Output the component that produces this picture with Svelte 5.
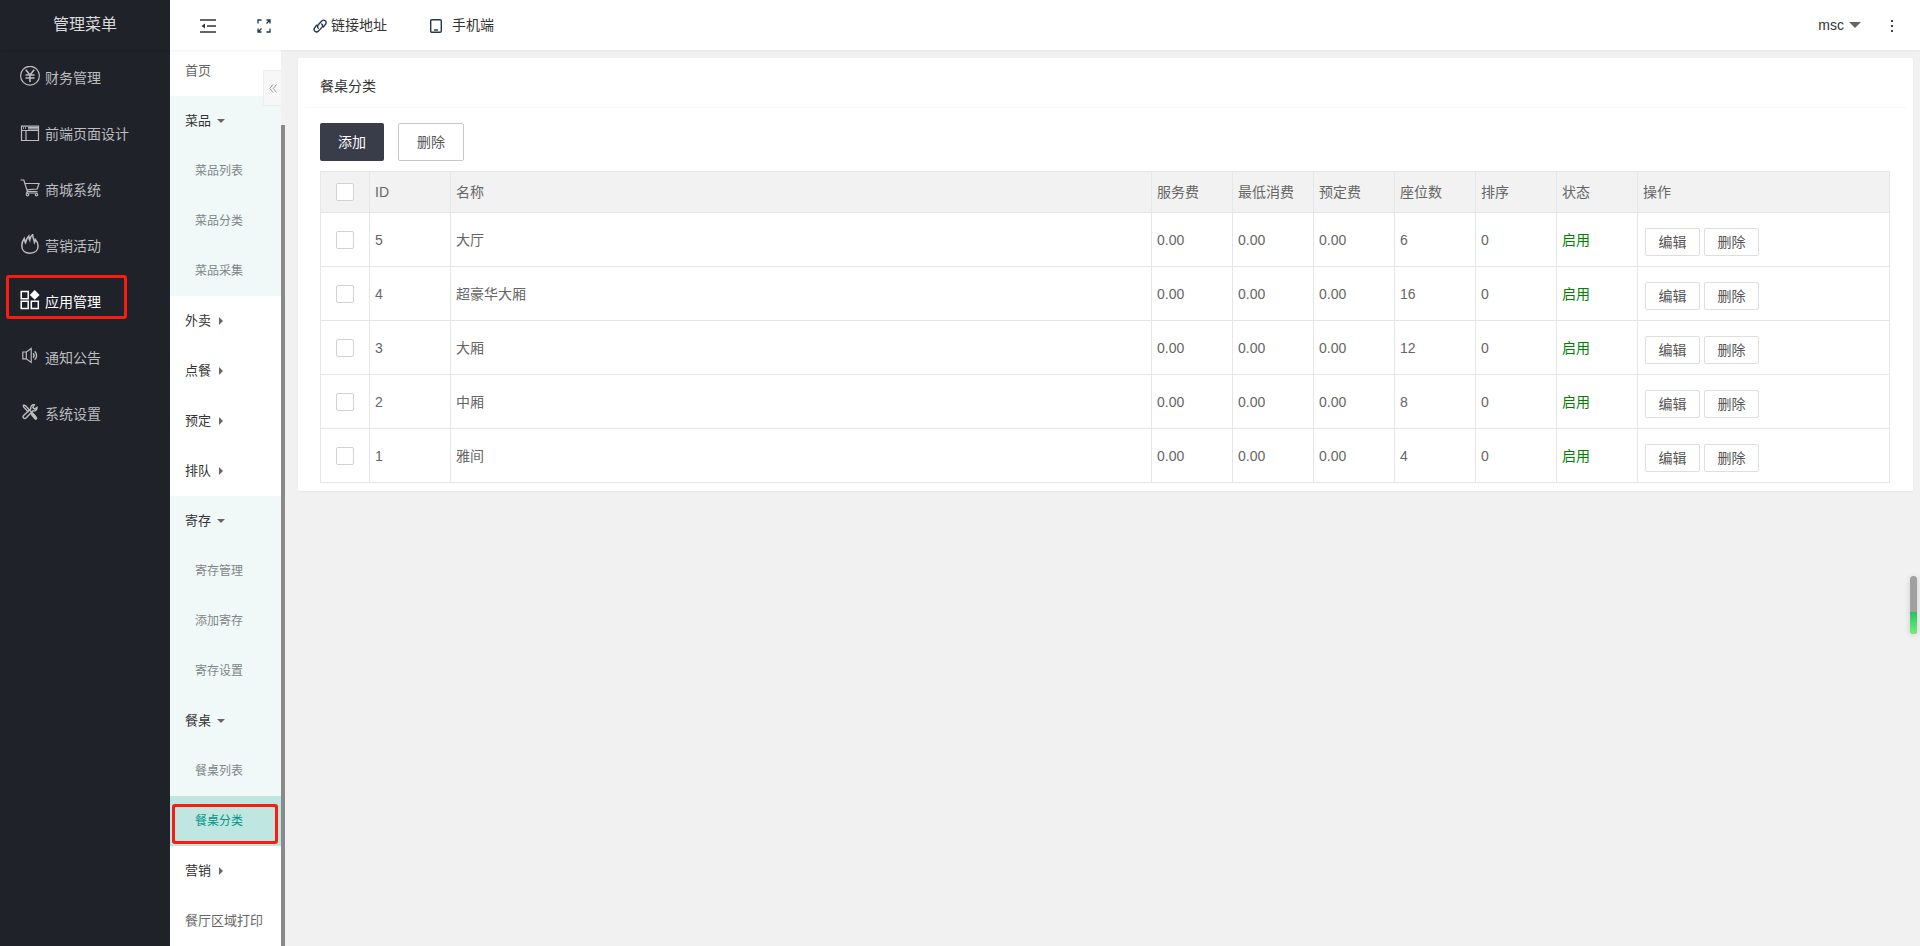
<script lang="ts">
  interface SubGroup {
    name: string
    plain?: boolean
    children?: string[]
  }

  const mainMenu = [
    { name: '财务管理', icon: 'yen' },
    { name: '前端页面设计', icon: 'layout' },
    { name: '商城系统', icon: 'cart' },
    { name: '营销活动', icon: 'fire' },
    { name: '应用管理', icon: 'app' },
    { name: '通知公告', icon: 'speaker' },
    { name: '系统设置', icon: 'tools' },
  ]

  const subMenu: SubGroup[] = [
    { name: '首页', plain: true },
    { name: '菜品', children: ['菜品列表', '菜品分类', '菜品采集'] },
    { name: '外卖' },
    { name: '点餐' },
    { name: '预定' },
    { name: '排队' },
    { name: '寄存', children: ['寄存管理', '添加寄存', '寄存设置'] },
    { name: '餐桌', children: ['餐桌列表', '餐桌分类'] },
    { name: '营销' },
    { name: '餐厅区域打印', plain: true },
  ]

  const columns = ['ID', '名称', '服务费', '最低消费', '预定费', '座位数', '排序', '状态', '操作']

  const rows = [
    { id: 5, name: '大厅', seats: 6 },
    { id: 4, name: '超豪华大厢', seats: 16 },
    { id: 3, name: '大厢', seats: 12 },
    { id: 2, name: '中厢', seats: 8 },
    { id: 1, name: '雅间', seats: 4 },
  ]

  let activeMain = $state('应用管理')
  let activeSub = $state('餐桌分类')
  let selected: number[] = $state([])

  function toggleAll(e: Event) {
    const checked = (e.currentTarget as HTMLInputElement).checked
    selected = checked ? rows.map((r) => r.id) : []
  }
</script>

<div class="layout">
  <aside class="side">
    <div class="logo">管理菜单</div>
    <nav>
      {#each mainMenu as item}
        <button class="side-item" class:active={item.name === activeMain} onclick={() => (activeMain = item.name)}>
          <svg class="side-icon" viewBox="0 0 20 20" aria-hidden="true">
            {#if item.icon === 'yen'}
              <circle cx="10" cy="9.700" r="9.400" />
              <path d="M5.800 3.800 10 9l4.200-5.200M10 9v7M5.500 9h9M5.500 12h9" stroke-width="1.600" />
            {:else if item.icon === 'layout'}
              <path d="M1.500 4.200h17v14.300h-17zM1.500 8.500h17M6 8.500v10" />
              <path d="M8 5.600h10M8 7h10" />
              <path d="M3 6h1M5 6h1" stroke-width="1.500" />
            {:else if item.icon === 'cart'}
              <path d="M.5 2h3.300l3.600 11.500h10M5 5.500h14l-1.800 5.500-10.500.8" />
              <path d="M7.400 13.500 6.500 15h11" />
              <circle cx="7.500" cy="16.700" r="1.200" />
              <circle cx="16.500" cy="16.700" r="1.200" />
            {:else if item.icon === 'fire'}
              <path d="M10 19.200c-5 0-8.200-3-8.200-7.500 0-3 1-5.200 2.400-7.200.2 1.800.5 3 1.300 4.300C6 6.300 6.800 4 8.800 2c.1 1.800.3 3 .9 4.200C10 4 10.900 2 12.700.5c-.2 3 1.300 5 1.800 8 .6-1 .8-1.800.9-3 1.800 2 2.700 4 2.700 6.500 0 4.500-3.200 7.200-8.100 7.200z" stroke-width="1.500" />
            {:else if item.icon === 'app'}
              <path d="M1.200 1.500h7v7.200h-7zM1.200 11.200h7v7.200h-7zM11.300 11.200h7v7.200h-7z" stroke-width="1.500" />
              <path class="solid" d="m14.700 0 4.900 4.900-4.900 4.900-4.900-4.900z" />
            {:else if item.icon === 'speaker'}
              <path d="M2.800 6h3.500l4.900-3.600v14l-4.900-3.600H2.800zM6.300 6v6.800" />
              <path d="M13.200 7.200c1 1.300 1 3.200 0 4.500M14.700 5.200c2.500 2.500 2.500 6 0 8.500" stroke-width="1.400" />
            {:else}
              <path d="m3.200 3 2.200.6L16 15" stroke-width="1.500" />
              <path d="m3.200 3 .6 2.200L8.500 10" stroke-width="1.500" />
              <path d="m12.300 12.300 3.400 4" stroke-width="3.200" stroke-linecap="round" />
              <path d="M17 5.200 14.500 7l-1.700-1.500 1.500-2.700c-2.500-.2-4.200 1.700-3.500 4L3.600 13.500c-1.700 1.800.7 4 2.500 2.400l6.800-7.200c2.400.7 4.600-1 4.100-3.500z" stroke-width="1.400" />
            {/if}
          </svg>
          <span>{item.name}</span>
        </button>
      {/each}
    </nav>
    <div class="mark mark-main"></div>
  </aside>

  <div class="page">
    <header class="topbar">
      <button class="tool tool-fold" aria-label="收起菜单">
        <svg width="16" height="16" viewBox="0 0 16 16" aria-hidden="true">
          <path d="M0 2h16M7 8h9M0 14h16" stroke="#333" stroke-width="1.500" />
          <path d="M5 5.500v5L1.500 8z" fill="#333" />
        </svg>
      </button>
      <button class="tool tool-full" aria-label="全屏">
        <svg width="14" height="14" viewBox="0 0 14 14" fill="none" stroke="#24384c" stroke-width="1.300" aria-hidden="true">
          <path d="M1 4.500V1h3.500M9.500 1H13v3.500M1 9.500V13h3.500M13 9.500V13H9.500M9.500 4.500 13 1M4.500 9.500 1 13" />
        </svg>
      </button>
      <a class="tool tool-link" href="#link">
        <svg width="14" height="14" viewBox="0 0 14 14" fill="none" stroke="#24384c" stroke-width="1.400" stroke-linecap="round" aria-hidden="true">
          <path d="M5.200 9.200C4.300 8 4.300 6.800 5.300 5.700l3.400-3.600c2.500-2.400 5.600.4 3.900 3.100L10.300 8" />
          <path d="M8.700 4.900c1.100 1 1.200 2.300.2 3.500l-3.400 3.700C3 14.300-.1 11.400 1.600 8.800l2-2.500" />
        </svg>
        <span>链接地址</span>
      </a>
      <a class="tool tool-phone" href="#mobile">
        <svg width="12" height="14" viewBox="0 0 12 14" fill="none" stroke="#24384c" stroke-width="1.400" aria-hidden="true">
          <rect x=".7" y=".7" width="10.600" height="12.600" rx="1.200" />
          <path d="M4 11h4" />
        </svg>
        <span>手机端</span>
      </a>
      <div class="spacer"></div>
      <button class="user">msc <i class="user-caret"></i></button>
      <button class="more" aria-label="更多"><i></i><i></i><i></i></button>
    </header>

    <div class="content">
      <div class="sub">
        <nav class="sub-list">
          {#each subMenu as group}
            <div class="sub-group" class:open={group.children}>
              <a class="sub-title" class:plain={group.plain} href="#{group.name}">
                {group.name}
                {#if !group.plain}<i class="caret"></i>{/if}
              </a>
              {#each group.children ?? [] as child}
                <a class="sub-item" class:active={child === activeSub} href="#{child}" onclick={() => (activeSub = child)}>{child}</a>
              {/each}
            </div>
          {/each}
        </nav>
        <div class="track"><div class="thumb"></div></div>
        <button class="collapse" aria-label="收起">
          <svg width="8" height="9" viewBox="0 0 8 9" fill="none" stroke="#999" aria-hidden="true">
            <path d="M4 .5.800 4.500 4 8.500M7.500.5l-3.200 4 3.200 4" />
          </svg>
        </button>
        <div class="mark mark-sub"></div>
      </div>

      <main class="main">
        <section class="card">
          <h1>餐桌分类</h1>
          <div class="card-body">
            <div class="actions">
              <button class="btn btn-add">添加</button>
              <button class="btn btn-plain">删除</button>
            </div>
            <table>
              <colgroup>
                <col class="col-check" />
                <col class="col-sm" />
                <col />
                <col class="col-sm" span="6" />
                <col class="col-ops" />
              </colgroup>
              <thead>
                <tr>
                  <th class="check">
                    <input type="checkbox" aria-label="全选" checked={selected.length === rows.length} onchange={toggleAll} />
                  </th>
                  {#each columns as col}
                    <th>{col}</th>
                  {/each}
                </tr>
              </thead>
              <tbody>
                {#each rows as row}
                  <tr>
                    <td class="check">
                      <input type="checkbox" aria-label={row.name} value={row.id} bind:group={selected} />
                    </td>
                    <td>{row.id}</td>
                    <td>{row.name}</td>
                    <td>0.00</td>
                    <td>0.00</td>
                    <td>0.00</td>
                    <td>{row.seats}</td>
                    <td>0</td>
                    <td class="enabled">启用</td>
                    <td>
                      <div class="ops">
                        <button class="btn-sm">编辑</button>
                        <button class="btn-sm">删除</button>
                      </div>
                    </td>
                  </tr>
                {/each}
              </tbody>
            </table>
          </div>
        </section>
      </main>
    </div>
  </div>

  <div class="gauge"><div class="gauge-fill"></div></div>
</div>

<style>
  :global(body) {
    background: #f1f1f1;
  }
  .layout {
    display: flex;
    position: relative;
    height: 100vh;
    overflow: hidden;
    font: 14px/24px "Liberation Sans", "Noto Sans CJK SC", sans-serif;
    color: #666;
  }
  .layout :global(*) {
    box-sizing: border-box;
  }
  button {
    margin: 0;
    padding: 0;
    border: 0;
    background: none;
    font: inherit;
    color: inherit;
    cursor: pointer;
  }
  a {
    color: inherit;
    text-decoration: none;
  }

  /* left menu */
  .side {
    position: relative;
    flex: none;
    width: 170px;
    background: #20222a;
  }
  .logo {
    height: 50px;
    line-height: 50px;
    font-size: 16px;
    text-align: center;
    color: #d9dadb;
    box-shadow: 0 1px 2px rgba(0, 0, 0, .15);
  }
  .side-item {
    display: flex;
    align-items: center;
    gap: 5px;
    width: 100%;
    height: 56px;
    padding-left: 20px;
    color: #bcbdbf;
  }
  .side-item.active {
    color: #fff;
  }
  .side-icon {
    width: 20px;
    height: 20px;
    margin-bottom: 4px;
    fill: none;
    stroke: currentColor;
    stroke-width: 1.2;
  }
  .side-icon .solid {
    fill: currentColor;
    stroke: none;
  }
  .mark {
    position: absolute;
    border: 3px solid #fb1b10;
    border-radius: 3px;
    pointer-events: none;
  }
  .mark-main {
    left: 6px;
    top: 275px;
    width: 121px;
    height: 44px;
  }
  .mark-sub {
    left: 2px;
    top: 754px;
    width: 106px;
    height: 40px;
  }

  .page {
    flex: 1;
    min-width: 0;
    display: flex;
    flex-direction: column;
  }

  /* top bar */
  .topbar {
    position: relative;
    z-index: 1;
    flex: none;
    display: flex;
    align-items: center;
    height: 50px;
    padding: 0 27px 0 30px;
    background: #fff;
    color: #333;
    box-shadow: 0 1px 2px rgba(0, 0, 0, .05);
  }
  .tool {
    display: flex;
    align-items: center;
    height: 50px;
  }
  .tool svg {
    margin-top: 2px;
  }
  .tool-full {
    margin-left: 41px;
  }
  .tool-link {
    margin-left: 42px;
    gap: 4px;
  }
  .tool-phone {
    margin-left: 43px;
    gap: 10px;
  }
  .spacer {
    flex: 1;
  }
  .user {
    display: flex;
    align-items: center;
    gap: 5px;
  }
  .user-caret {
    border: 6px solid transparent;
    border-top-color: #666;
    border-bottom: 0;
  }
  .more {
    display: grid;
    gap: 3px;
    margin-top: 2px;
    margin-left: 30px;
  }
  .more i {
    width: 2px;
    height: 2px;
    background: #444;
  }

  .content {
    flex: 1;
    min-height: 0;
    display: flex;
  }

  /* second menu */
  .sub {
    position: relative;
    flex: none;
    display: flex;
    width: 115px;
    background: #fff;
  }
  .sub-list {
    flex: 1;
    margin-top: -4px;
    overflow: hidden;
  }
  .sub-group.open {
    background: #f0f9f8;
  }
  .sub-title,
  .sub-item {
    display: block;
    height: 50px;
    line-height: 50px;
    white-space: nowrap;
  }
  .sub-title {
    padding-left: 15px;
    font-size: 13px;
    color: #333;
  }
  .sub-title.plain {
    color: #666;
  }
  .sub-item {
    padding-left: 25px;
    font-size: 12px;
    color: #808588;
  }
  .sub-item.active {
    background: #c0e6e1;
    color: #009688;
  }
  .caret {
    display: inline-block;
    margin-left: 4px;
    border: 4px solid transparent;
    border-left-color: #666;
    border-right: 0;
  }
  .open .caret {
    margin-left: 2px;
    border: 4px solid transparent;
    border-top-color: #666;
    border-bottom: 0;
    vertical-align: 2px;
  }
  .track {
    width: 4px;
    padding-top: 75px;
    background: #f1f1f1;
  }
  .thumb {
    height: 100%;
    background: #8a8a8a;
  }
  .collapse {
    position: absolute;
    top: 20px;
    right: 4px;
    display: flex;
    align-items: center;
    justify-content: center;
    width: 18px;
    height: 36px;
    border: 1px solid #eee;
    border-right: 0;
    background: #f7f7f7;
  }

  /* content card */
  .main {
    flex: 1;
    min-width: 0;
    padding: 8px 7px 8px 13px;
  }
  .card {
    padding: 0 7px 8px;
    border-radius: 2px;
    background: #fff;
    box-shadow: 0 1px 2px rgba(0, 0, 0, .05);
  }
  h1 {
    height: 50px;
    margin: 0;
    padding-left: 15px;
    border-bottom: 1px solid #f6f6f6;
    font-size: 14px;
    font-weight: 400;
    line-height: 56px;
    color: #333;
  }
  .card-body {
    padding: 15px 16px 0 15px;
  }
  .actions {
    display: flex;
    gap: 14px;
    margin-bottom: 10px;
  }
  .btn {
    height: 38px;
    padding: 0 18px;
    border-radius: 2px;
  }
  .btn-add {
    background: #393d49;
    color: #fff;
  }
  .btn-plain {
    border: 1px solid #c9c9c9;
    color: #555;
  }
  table {
    width: 100%;
    border-collapse: collapse;
    table-layout: fixed;
  }
  .col-check {
    width: 49px;
  }
  .col-sm {
    width: 81px;
  }
  .col-ops {
    width: 252px;
  }
  th,
  td {
    height: 54px;
    padding: 0 5px;
    border: 1px solid #e6e6e6;
    font-weight: 400;
    text-align: left;
  }
  th {
    height: 41px;
    background: #f2f2f2;
  }
  .check {
    padding: 0;
    text-align: center;
  }
  .check input {
    appearance: none;
    display: block;
    width: 18px;
    height: 18px;
    margin: 0 auto;
    border: 1px solid #d2d2d2;
    border-radius: 2px;
    background: #fff;
  }
  .check input:checked {
    border-color: #5fb878;
    background: #5fb878;
  }
  .enabled {
    color: #008000;
  }
  .ops {
    display: flex;
    gap: 4px;
    padding: 4px 0 0 2px;
  }
  .btn-sm {
    width: 55px;
    height: 28px;
    border: 1px solid #dedede;
    border-radius: 2px;
    color: #555;
  }

  .gauge {
    position: absolute;
    top: 576px;
    right: 3px;
    display: flex;
    align-items: flex-end;
    width: 7px;
    height: 58px;
    border-radius: 4px;
    overflow: hidden;
    background: #a0a0a0;
    box-shadow: 0 1px 6px rgba(0, 0, 0, .15);
  }
  .gauge-fill {
    width: 100%;
    height: 22px;
    background: linear-gradient(#28c45f, #6df07a);
  }
</style>
